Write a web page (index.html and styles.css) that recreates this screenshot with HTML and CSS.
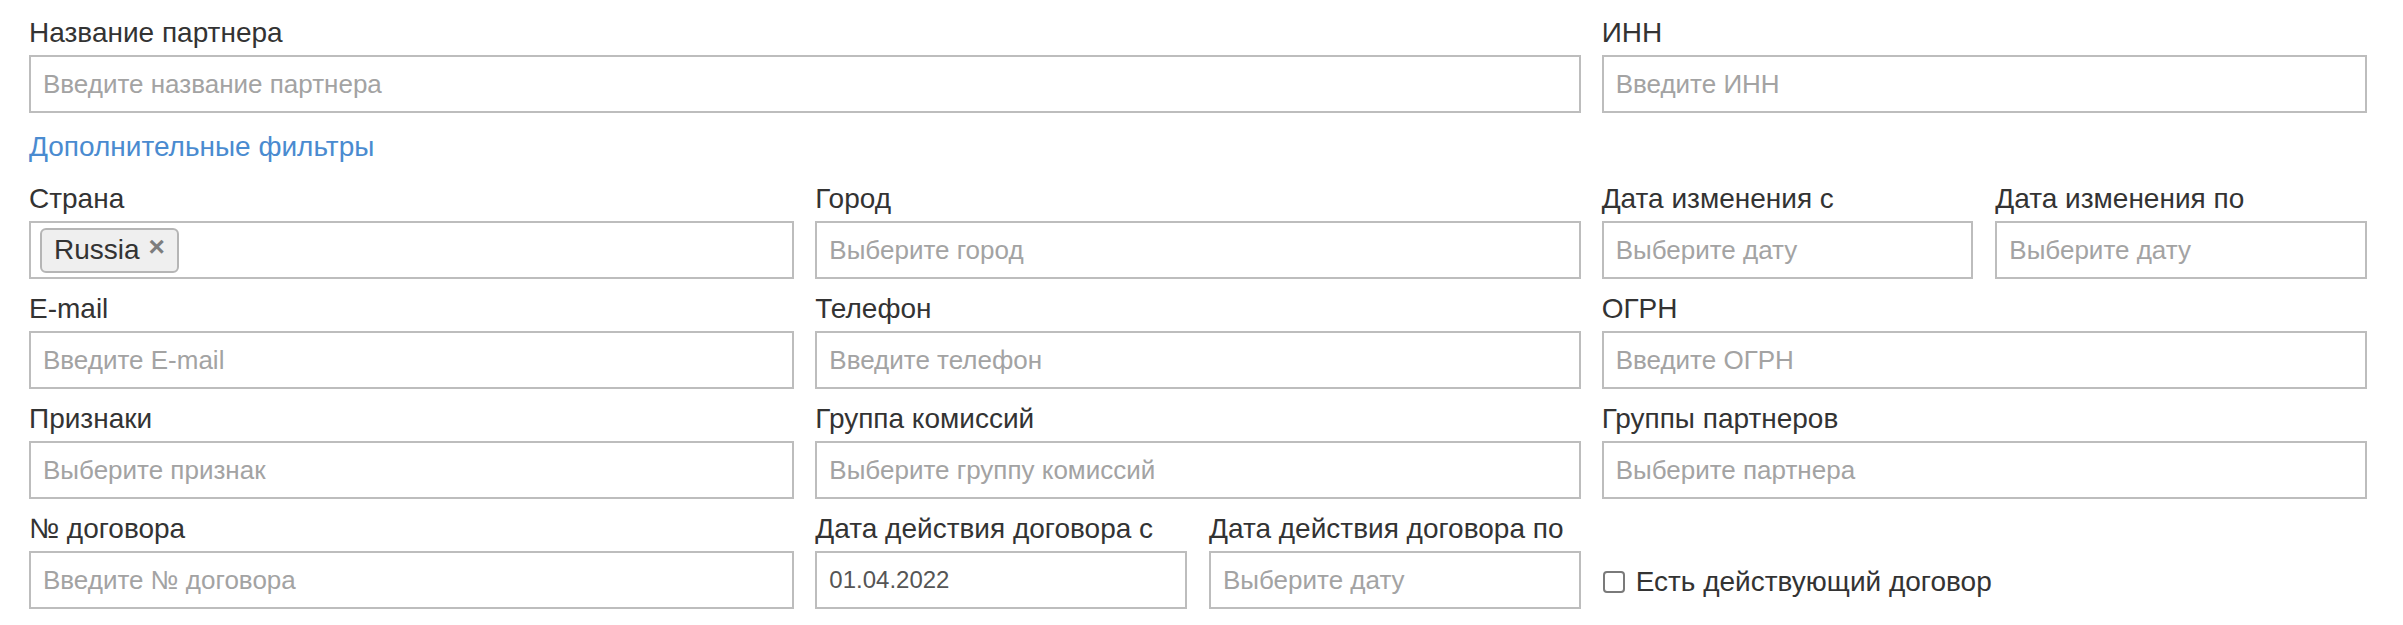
FILE: index.html
```html
<!DOCTYPE html>
<html lang="ru">
<head>
<meta charset="utf-8">
<title>Фильтр партнеров</title>
<link rel="stylesheet" href="styles.css">
</head>
<body>
<form class="filters">
  <div class="field span2">
    <label class="lbl">Название партнера</label>
    <input class="inp" type="text" placeholder="Введите название партнера">
  </div>
  <div class="field">
    <label class="lbl">ИНН</label>
    <input class="inp" type="text" placeholder="Введите ИНН">
  </div>

  <div class="more"><a class="more-link" href="#">Дополнительные фильтры</a></div>

  <div class="field">
    <label class="lbl">Страна</label>
    <div class="inp multi">
      <span class="tag">Russia <span class="tag-x">×</span></span>
    </div>
  </div>
  <div class="field">
    <label class="lbl">Город</label>
    <input class="inp" type="text" placeholder="Выберите город">
  </div>
  <div class="pair">
    <div class="field">
      <label class="lbl">Дата изменения с</label>
      <input class="inp" type="text" placeholder="Выберите дату">
    </div>
    <div class="field">
      <label class="lbl">Дата изменения по</label>
      <input class="inp" type="text" placeholder="Выберите дату">
    </div>
  </div>

  <div class="field">
    <label class="lbl">E-mail</label>
    <input class="inp" type="text" placeholder="Введите E-mail">
  </div>
  <div class="field">
    <label class="lbl">Телефон</label>
    <input class="inp" type="text" placeholder="Введите телефон">
  </div>
  <div class="field">
    <label class="lbl">ОГРН</label>
    <input class="inp" type="text" placeholder="Введите ОГРН">
  </div>

  <div class="field">
    <label class="lbl">Признаки</label>
    <input class="inp" type="text" placeholder="Выберите признак">
  </div>
  <div class="field">
    <label class="lbl">Группа комиссий</label>
    <input class="inp" type="text" placeholder="Выберите группу комиссий">
  </div>
  <div class="field">
    <label class="lbl">Группы партнеров</label>
    <input class="inp" type="text" placeholder="Выберите партнера">
  </div>

  <div class="field">
    <label class="lbl">№ договора</label>
    <input class="inp" type="text" placeholder="Введите № договора">
  </div>
  <div class="pair">
    <div class="field">
      <label class="lbl">Дата действия договора с</label>
      <input class="inp inp-filled" type="text" value="01.04.2022" placeholder="Выберите дату">
    </div>
    <div class="field">
      <label class="lbl">Дата действия договора по</label>
      <input class="inp" type="text" placeholder="Выберите дату">
    </div>
  </div>
  <div class="check-cell">
    <label class="check"><input class="cb" type="checkbox"><span>Есть действующий договор</span></label>
  </div>
</form>
</body>
</html>
```
FILE: styles.css
```css
html, body {
  margin: 0;
  padding: 0;
  background: #ffffff;
}

body {
  font-family: "Liberation Sans", Arial, sans-serif;
  font-size: 28px;
  color: #333333;
}

.filters {
  display: grid;
  grid-template-columns: repeat(3, 1fr);
  column-gap: 21px;
  row-gap: 16px;
  padding: 19px 36px 0 29px;
  width: 2338px;
}

.field {
  display: flex;
  flex-direction: column;
  min-width: 0;
}

.span2 {
  grid-column: span 2;
}

.lbl {
  display: block;
  font-size: 28px;
  line-height: 28px;
  margin-bottom: 8px;
  color: #333333;
  white-space: nowrap;
}

.inp {
  box-sizing: border-box;
  width: 100%;
  height: 58px;
  margin: 0;
  border: 2px solid #bdbdbd;
  border-radius: 0;
  padding: 0 12px;
  font-family: "Liberation Sans", Arial, sans-serif;
  font-size: 26px;
  color: #555555;
  background: #ffffff;
  outline: none;
}

.inp-filled {
  font-size: 24px;
}

.inp::placeholder {
  color: #a3a3a3;
  opacity: 1;
}

.more {
  grid-column: 1 / -1;
  margin: 4px 0 8px;
  line-height: 28px;
}

.more-link {
  color: #4a8bd0;
  text-decoration: none;
  font-size: 28px;
}

.multi {
  display: flex;
  align-items: center;
  padding: 0 9px;
}

.tag {
  box-sizing: border-box;
  display: inline-flex;
  align-items: center;
  gap: 9px;
  height: 45px;
  padding: 0 12px 0 12px;
  background: #efefef;
  border: 2px solid #b5b5b5;
  border-radius: 6px;
  color: #333333;
  font-size: 28px;
}

.tag-x {
  color: #7d7d7d;
  font-weight: bold;
  font-size: 28px;
  line-height: 1;
  margin-top: -6px;
}

.pair {
  display: grid;
  grid-template-columns: 1fr 1fr;
  column-gap: 22px;
  min-width: 0;
}

.check-cell {
  display: flex;
  align-items: flex-end;
  padding-bottom: 13px;
}

.check {
  display: flex;
  align-items: center;
  gap: 11px;
  font-size: 28px;
  color: #333333;
  line-height: 28px;
}

.cb {
  appearance: none;
  -webkit-appearance: none;
  box-sizing: border-box;
  width: 22px;
  height: 22px;
  margin: 0 0 0 1px;
  border: 2px solid #7a7a7a;
  border-radius: 4px;
  background: #ffffff;
}
```
